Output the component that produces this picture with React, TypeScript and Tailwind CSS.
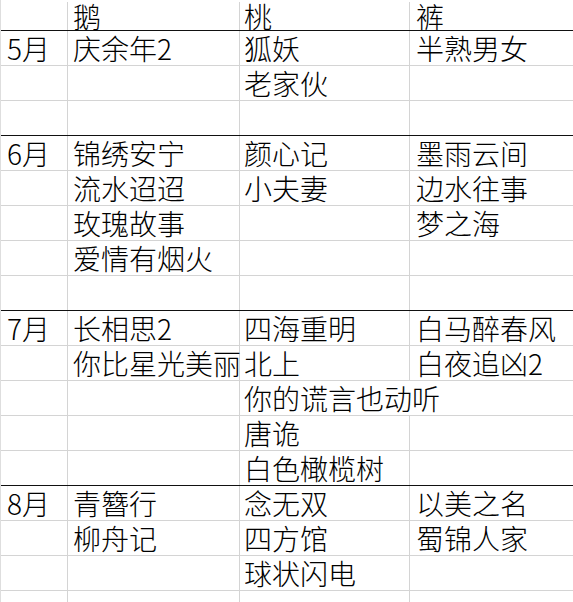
import React from 'react'

type Row = string[]

const header: Row = ['', '鹅', '桃', '裤']

const blocks: Row[][] = [
  [
    ['5月', '庆余年2', '狐妖', '半熟男女'],
    ['', '', '老家伙', ''],
    ['', '', '', ''],
  ],
  [
    ['6月', '锦绣安宁', '颜心记', '墨雨云间'],
    ['', '流水迢迢', '小夫妻', '边水往事'],
    ['', '玫瑰故事', '', '梦之海'],
    ['', '爱情有烟火', '', ''],
    ['', '', '', ''],
  ],
  [
    ['7月', '长相思2', '四海重明', '白马醉春风'],
    ['', '你比星光美丽', '北上', '白夜追凶2'],
    ['', '', '你的谎言也动听', ''],
    ['', '', '唐诡', ''],
    ['', '', '白色橄榄树', ''],
  ],
  [
    ['8月', '青簪行', '念无双', '以美之名'],
    ['', '柳舟记', '四方馆', '蜀锦人家'],
    ['', '', '球状闪电', ''],
    ['', '', '', ''],
  ],
]

const colW = [67, 172, 170]
const widths = ['w-[67px]', 'w-[172px]', 'w-[170px]', 'flex-1']
const pads = ['pl-[6px]', 'pl-[5px]', 'pl-[4px]', 'pl-[6px]']

const SheetRow: React.FC<{ cells: Row; heavy?: boolean; header?: boolean }> = ({ cells, heavy, header }) => {
  // text spilling past its column hides the next vertical line, like Excel
  const spills = cells.map((c, i) => i < 3 && c.length * 28 + 10 > colW[i] && cells[i + 1] === '')
  return (
    <div
      className={`flex ${header ? 'h-[31px] pt-[2px]' : 'h-[35px]'} border-b ${heavy ? 'border-[#111]' : 'border-[#d4d4d4]'}`}
    >
      {cells.map((c, i) => (
        <div
          key={i}
          className={`${widths[i]} ${pads[i]} shrink-0 h-full flex items-center whitespace-nowrap overflow-visible ${
            i < 3 && !spills[i] ? 'border-r border-[#d4d4d4]' : ''
          }`}
        >
          <span className="text-[28px] leading-[28px] font-light text-black">{c}</span>
        </div>
      ))}
    </div>
  )
}

export default function App() {
  return (
    <div
      className="w-[573px] h-[602px] overflow-hidden bg-white border-l border-[#dedede]"
      style={{ fontFamily: '"Noto Sans CJK SC", "Noto Sans", sans-serif' }}
    >
      <SheetRow cells={header} heavy header />
      {blocks.map((block, b) =>
        block.map((r, i) => (
          <SheetRow key={`${b}-${i}`} cells={r} heavy={i === block.length - 1 && b < blocks.length - 1} />
        )),
      )}
    </div>
  )
}
